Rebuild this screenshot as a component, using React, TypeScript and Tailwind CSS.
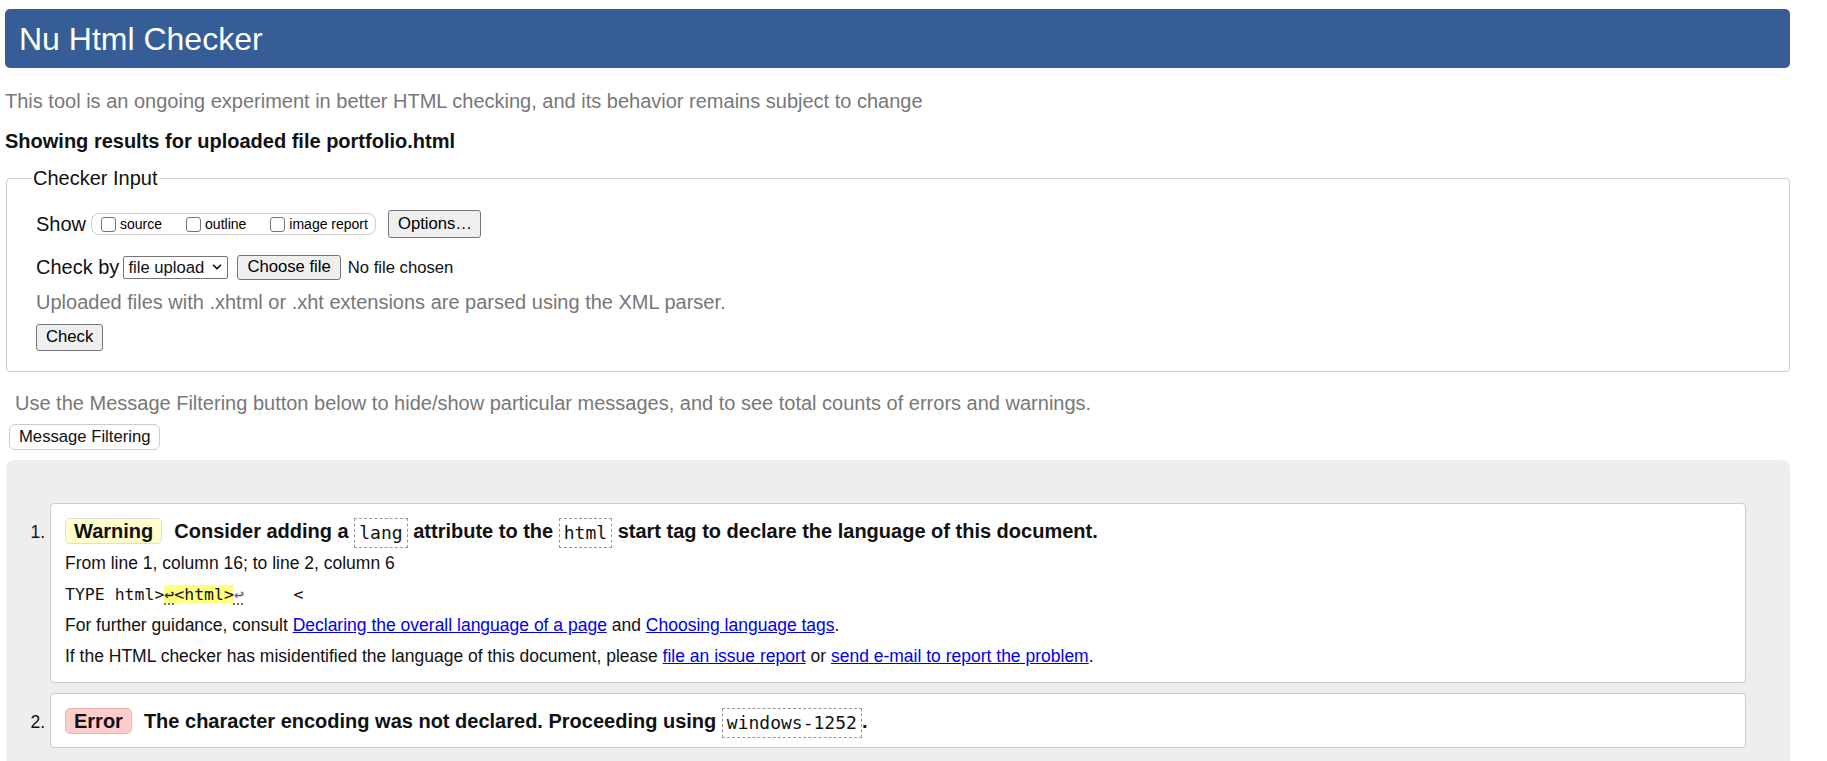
import { ChevronDown } from "lucide-react";

const Checkbox = ({ label }: { label: string }) => (
  <label className="flex items-center gap-[4px] text-[14px] leading-none text-black">
    <span className="w-[15px] h-[15px] border border-[#767676] rounded-[3px] bg-white" />
    <span>{label}</span>
  </label>
);

const Btn = ({ children, className = "" }: { children: React.ReactNode; className?: string }) => (
  <button
    className={`bg-[#efefef] border border-[#767676] rounded-[3px] px-[9px] text-[16.67px] leading-none text-black whitespace-nowrap ${className}`}
  >
    {children}
  </button>
);

const Code = ({ children }: { children: React.ReactNode }) => (
  <code className="inline-block border border-dashed border-[#999] px-[4px] leading-[28px] font-['DejaVu_Sans_Mono',monospace] text-[18px] font-normal align-middle">
    {children}
  </code>
);

const A = ({ children }: { children: React.ReactNode }) => (
  <a href="#" className="text-[#0000ee] underline">
    {children}
  </a>
);

const App = () => {
  return (
    <div className="w-[1785px] ml-[5px] pt-[9px] font-['Liberation_Sans',Arial,sans-serif] text-[#111]">
      <header className="h-[59px] bg-[#365d95] rounded-[5px] flex items-center pl-[14px]">
        <h1 className="text-[32px] text-white font-normal leading-none">Nu Html Checker</h1>
      </header>

      <p className="mt-[21px] text-[20px] leading-[24px] text-[#777]">
        This tool is an ongoing experiment in better HTML checking, and its behavior remains subject to change
      </p>
      <p className="mt-[16px] text-[20px] leading-[24px] font-bold">Showing results for uploaded file portfolio.html</p>

      <fieldset className="mt-[14px] ml-[1px] border border-[#ccc] rounded-[4px] px-[29px] pb-[20px]">
        <legend className="-ml-[4px] px-[1px] text-[20px] leading-[23px]">Checker Input</legend>
        <div className="pt-[20px] flex flex-col items-start">
          <div className="h-[28px] flex items-center">
            <span className="text-[20px] mr-[5px]">Show</span>
            <div className="h-[22px] flex items-center gap-[24px] border border-[#ccc] rounded-[8px] pl-[9px] pr-[7px]">
              <Checkbox label="source" />
              <Checkbox label="outline" />
              <Checkbox label="image report" />
            </div>
            <Btn className="ml-[12px] h-[28px] w-[93px]">Options…</Btn>
          </div>

          <div className="mt-[16px] h-[26px] flex items-center">
            <span className="text-[20px] mr-[4px]">Check by</span>
            <div className="h-[23px] w-[105px] flex items-center justify-between border border-[#767676] rounded-[2px] pl-[4px] pr-[3px] text-[16.67px] bg-white">
              <span>file upload</span>
              <ChevronDown size={14} strokeWidth={3} />
            </div>
            <Btn className="ml-[9px] h-[25px] px-[8px]">Choose file</Btn>
            <span className="ml-[7px] text-[16.67px]">No file chosen</span>
          </div>

          <p className="mt-[10px] text-[20px] leading-[24px] text-[#777]">
            Uploaded files with .xhtml or .xht extensions are parsed using the XML parser.
          </p>

          <Btn className="mt-[10px] h-[27px] w-[67px]">Check</Btn>
        </div>
      </fieldset>

      <p className="mt-[19px] ml-[10px] text-[20px] leading-[24px] text-[#777]">
        Use the Message Filtering button below to hide/show particular messages, and to see total counts of errors and
        warnings.
      </p>
      <button className="mt-[9px] ml-[4px] h-[26px] px-[9px] bg-white border border-[#ccc] rounded-[6px] text-[16.67px] leading-none">
        Message Filtering
      </button>

      <div className="mt-[10px] ml-[1px] bg-[#eee] rounded-t-[8px] pt-[43px] pl-[44px] pr-[44px] pb-[40px]">
        <ol className="list-decimal flex flex-col gap-[10px] text-[17.5px]">
          <li className="bg-white border border-[#ccc] rounded-[4px] pt-[11px] pb-[10px] px-[14px] leading-[31px]">
            <p className="text-[20px] leading-[33px] font-bold">
              <span className="inline-block bg-[#ffffcc] border border-[#ddd] rounded-[5px] px-[8px] leading-[24px] mr-[12px]">
                Warning
              </span>
              Consider adding a <Code>lang</Code> attribute to the <Code>html</Code> start tag to declare the language
              of this document.
            </p>
            <p>From line 1, column 16; to line 2, column 6</p>
            <p className="font-['DejaVu_Sans_Mono',monospace] text-[16.5px] whitespace-pre">
              <span>TYPE html&gt;</span>
              <span className="bg-[#ffff80]">
                <span className="underline decoration-dotted decoration-[#555] underline-offset-4">↩</span>
                {"<html>"}
              </span>
              <span className="underline decoration-dotted decoration-[#555] underline-offset-4 text-[#665577]">↩</span>
              <span>{"     <"}</span>
            </p>
            <p>
              For further guidance, consult <A>Declaring the overall language of a page</A> and{" "}
              <A>Choosing language tags</A>.
            </p>
            <p>
              If the HTML checker has misidentified the language of this document, please <A>file an issue report</A> or{" "}
              <A>send e-mail to report the problem</A>.
            </p>
          </li>
          <li className="bg-white border border-[#ccc] rounded-[4px] pt-[11px] pb-[9px] px-[14px]">
            <p className="text-[20px] leading-[33px] font-bold">
              <span className="inline-block bg-[#ffcccc] border border-[#e8b8b8] rounded-[5px] px-[8px] leading-[24px] mr-[12px]">
                Error
              </span>
              The character encoding was not declared. Proceeding using <Code>windows-1252</Code>.
            </p>
          </li>
        </ol>
      </div>
    </div>
  );
};

export default App;
